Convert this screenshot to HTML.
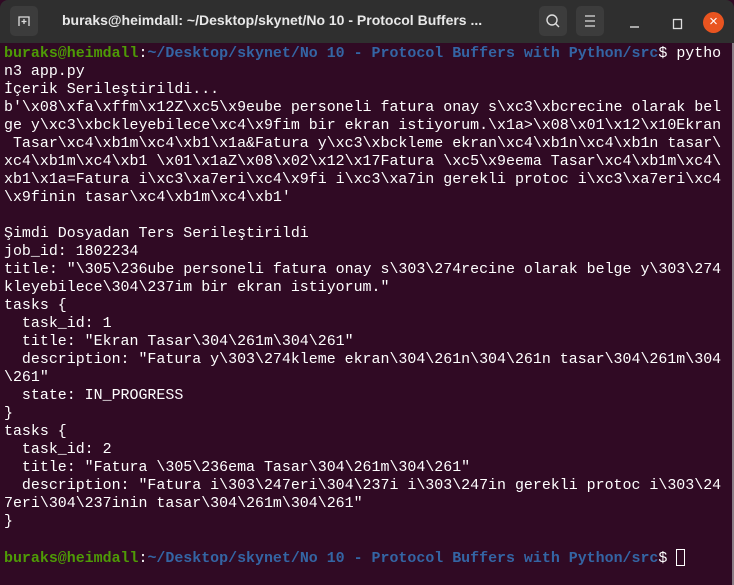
<!DOCTYPE html>
<html><head><meta charset="utf-8"><style>
html,body{margin:0;padding:0;width:734px;height:585px;overflow:hidden;background:#300a24;}
.tb{position:absolute;left:0;top:0;width:734px;height:43px;background:#2f2f2f;border-radius:8px 8px 0 0;}
.btn{position:absolute;top:6px;width:28px;height:30px;background:#3c3c3c;border-radius:5px;color:#ddd;}
.title{position:absolute;left:62px;top:12px;font:bold 14px "Liberation Sans",sans-serif;color:#e8e8e8;white-space:nowrap;}
.close{position:absolute;left:703px;top:12px;width:21px;height:21px;border-radius:50%;background:#e95420;color:#fff;font:15px "Liberation Sans",sans-serif;text-align:center;line-height:20px;}
pre{position:absolute;left:4px;top:45px;margin:0;font:14.95px/18px "Liberation Mono","DejaVu Sans Mono",monospace;color:#fff;}
.g{color:#4e9a06;font-weight:bold}.b{color:#3465a4;font-weight:bold}
.cur{display:inline-block;width:9px;height:17px;border:1px solid #fff;vertical-align:-4px;box-sizing:border-box;}
.edge{position:absolute;left:732px;top:43px;width:2px;height:542px;background:#8a7d86;}
</style></head><body>
<div class="tb">
<div class="btn" style="left:10px"><svg width="28" height="30" viewBox="0 0 28 30"><path d="M9 20V11h10v9M14 13v5M11.5 15.5h5" stroke="#ddd" stroke-width="1.3" fill="none"/></svg></div>
<div class="title">buraks@heimdall: ~/Desktop/skynet/No 10 - Protocol Buffers ...</div>
<div class="btn" style="left:539px"><svg width="28" height="30" viewBox="0 0 28 30"><circle cx="13" cy="14" r="5" stroke="#ddd" stroke-width="1.4" fill="none"/><path d="M16.5 17.5l3.5 3.5" stroke="#ddd" stroke-width="1.4"/></svg></div>
<div class="btn" style="left:576px"><svg width="28" height="30" viewBox="0 0 28 30"><path d="M9 10h10M9 15h10M9 20h10" stroke="#ddd" stroke-width="1.3"/></svg></div>
<svg style="position:absolute;left:625px;top:15px" width="90" height="16"><path d="M5 12h9" stroke="#ddd" stroke-width="1.4"/><rect x="48.5" y="4.5" width="8" height="9" stroke="#ddd" stroke-width="1.3" fill="none"/></svg>
<div class="close">×</div>
</div>
<div class="edge"></div>
<pre><span class="g">buraks@heimdall</span>:<span class="b">~/Desktop/skynet/No 10 - Protocol Buffers with Python/src</span>$ pytho
n3 app.py
İçerik Serileştirildi...
b'\x08\xfa\xffm\x12Z\xc5\x9eube personeli fatura onay s\xc3\xbcrecine olarak bel
ge y\xc3\xbckleyebilece\xc4\x9fim bir ekran istiyorum.\x1a>\x08\x01\x12\x10Ekran
 Tasar\xc4\xb1m\xc4\xb1\x1a&amp;Fatura y\xc3\xbckleme ekran\xc4\xb1n\xc4\xb1n tasar\
xc4\xb1m\xc4\xb1 \x01\x1aZ\x08\x02\x12\x17Fatura \xc5\x9eema Tasar\xc4\xb1m\xc4\
xb1\x1a=Fatura i\xc3\xa7eri\xc4\x9fi i\xc3\xa7in gerekli protoc i\xc3\xa7eri\xc4
\x9finin tasar\xc4\xb1m\xc4\xb1'

Şimdi Dosyadan Ters Serileştirildi
job_id: 1802234
title: "\305\236ube personeli fatura onay s\303\274recine olarak belge y\303\274
kleyebilece\304\237im bir ekran istiyorum."
tasks {
  task_id: 1
  title: "Ekran Tasar\304\261m\304\261"
  description: "Fatura y\303\274kleme ekran\304\261n\304\261n tasar\304\261m\304
\261"
  state: IN_PROGRESS
}
tasks {
  task_id: 2
  title: "Fatura \305\236ema Tasar\304\261m\304\261"
  description: "Fatura i\303\247eri\304\237i i\303\247in gerekli protoc i\303\24
7eri\304\237inin tasar\304\261m\304\261"
}

<span class="g">buraks@heimdall</span>:<span class="b">~/Desktop/skynet/No 10 - Protocol Buffers with Python/src</span>$ <span class="cur"></span></pre>
</body></html>
